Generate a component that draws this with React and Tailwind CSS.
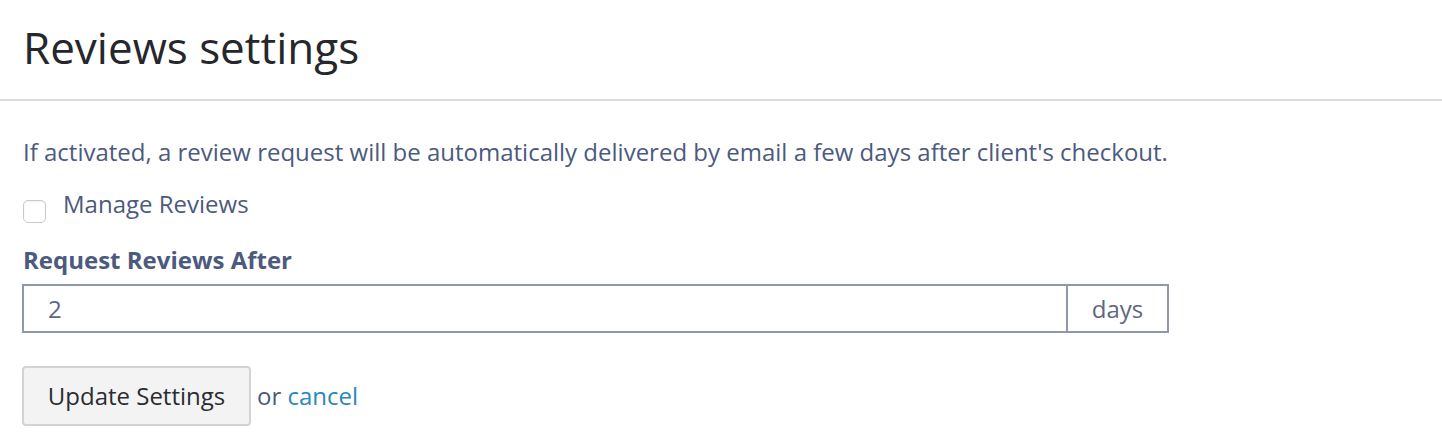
export default function App() {
  return (
    <div className="w-[1442px] h-[446px] bg-white font-['Open_Sans',sans-serif]">
      <div className="h-[101px] border-b-2 border-[#dcdde1] pl-[23px] pt-[17px]">
        <h1 className="text-[44px] leading-[60px] text-[#25272c]">Reviews settings</h1>
      </div>
      <div className="pl-[23px] pt-[35px]">
        <p className="text-[24px] leading-[32px] text-[#4c5a7e]">
          If activated, a review request will be automatically delivered by email a few days after client's checkout.
        </p>
        <div className="mt-[20px] flex items-start gap-[17px]">
          <div className="mt-[12px] w-[23px] h-[23px] rounded-[5px] border border-[#c9c9c9] bg-white shadow-[inset_0_1px_2px_rgba(0,0,0,0.05)]" />
          <span className="text-[24px] leading-[32px] text-[#4c5a7e]">Manage Reviews</span>
        </div>
        <div className="mt-[21px] text-[24px] leading-[32px] font-bold text-[#4c5a7e]">Request Reviews After</div>
        <div className="mt-[8px] flex w-[1147px] h-[49px] -ml-px">
          <div className="flex-1 border-2 border-[#8e96b0] flex items-center pl-[24px] text-[24px] text-[#5e6782]">2</div>
          <div className="w-[101px] border-2 border-l-0 border-[#8e96b0] flex items-center justify-center text-[24px] text-[#5e6782]">days</div>
        </div>
        <div className="mt-[33px] flex items-center gap-[6px] -ml-px">
          <button className="w-[229px] h-[60px] rounded-[4px] border-2 border-[#d2d3d6] bg-[#f3f3f4] text-[24px] text-[#2a2c31]">Update Settings</button>
          <span className="text-[24px] text-[#4c5a7e]">or <span className="text-[#2a86c0]">cancel</span></span>
        </div>
      </div>
    </div>
  );
}
